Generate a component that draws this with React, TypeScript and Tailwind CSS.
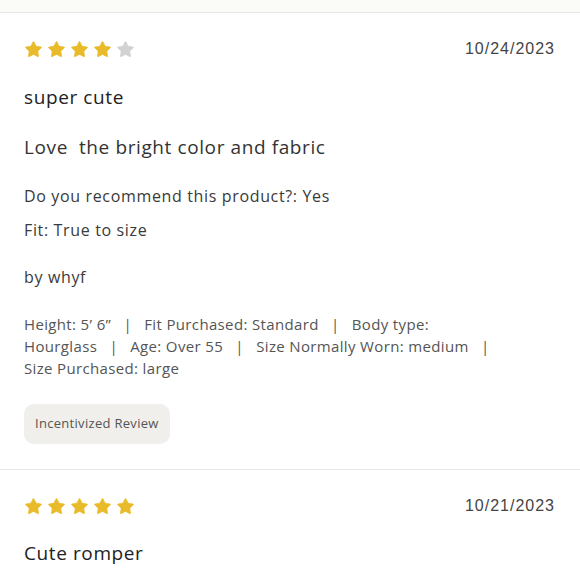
import { Star } from "lucide-react";

const reviews = [
  {
    rating: 4,
    date: "10/24/2023",
    title: "super cute",
    body: "Love  the bright color and fabric",
    recommend: "Yes",
    fit: "True to size",
    author: "whyf",
    specs: [
      "Height: 5\u2019 6\u201D",
      "Fit Purchased: Standard",
      "Body type: Hourglass",
      "Age: Over 55",
      "Size Normally Worn: medium",
      "Size Purchased: large",
    ],
    incentivized: true,
  },
  {
    rating: 5,
    date: "10/21/2023",
    title: "Cute romper",
  },
];

const Stars = ({ rating }: { rating: number }) => (
  <div className="flex gap-[4px]">
    {[0, 1, 2, 3, 4].map((i) => (
      <Star
        key={i}
        className={
          i < rating
            ? "w-[19px] h-[19px] fill-[#e9bb2a] text-[#e9bb2a]"
            : "w-[19px] h-[19px] fill-[#d2d2d2] text-[#d2d2d2]"
        }
        strokeWidth={1}
      />
    ))}
  </div>
);

const App = () => {
  return (
    <div className="w-[580px] h-[580px] overflow-hidden bg-white font-['Open_Sans','Noto_Sans',sans-serif] text-[#333]">
      <div className="h-[13px] bg-[#fbfbf7] border-b border-[#e6e6e3]" />
      {reviews.map((r, idx) => (
        <div
          key={idx}
          className={
            idx === 0
              ? "pl-6 pr-[25px] pt-[26px] pb-[25px] border-b border-[#e6e6e3]"
              : "pl-6 pr-[25px] pt-[26px]"
          }
        >
          <div className="flex items-center justify-between h-[20px]">
            <Stars rating={r.rating} />
            <span className="font-['Liberation_Sans',sans-serif] text-[16px] tracking-[1px] text-[#444]">
              {r.date}
            </span>
          </div>
          <div
            className={
              idx === 0
                ? "mt-[26px] text-[19px] tracking-[0.6px] text-[#222] leading-[24px]"
                : "mt-[25px] text-[19px] tracking-[0.6px] text-[#222] leading-[24px]"
            }
          >
            {r.title}
          </div>
          {r.body && (
            <>
              <div className="mt-[26px] text-[19px] tracking-[0.6px] text-[#333] leading-[24px] whitespace-pre">
                {r.body}
              </div>
              <div className="mt-[26px] text-[16px] tracking-[0.65px] leading-[22px] text-[#3a3a3a]">
                Do you recommend this product?: {r.recommend}
              </div>
              <div className="mt-[12px] text-[16px] tracking-[0.65px] leading-[22px] text-[#3a3a3a]">
                Fit: {r.fit}
              </div>
              <div className="mt-[25px] text-[16px] tracking-[0.65px] leading-[22px] text-[#3a3a3a]">
                by {r.author}
              </div>
              <div className="mt-[25px] mr-[56px] text-[15px] tracking-[0.35px] leading-[22px] text-[#555]">
                {r.specs!.map((s, i) => (
                  <span key={i}>
                    {s}
                    {i < r.specs!.length - 1 && (
                      <>
                        <span className="whitespace-nowrap">
                          {"\u00a0"}
                          <span className="px-[8px]">|</span>
                        </span>{" "}
                      </>
                    )}
                  </span>
                ))}
              </div>
              {r.incentivized && (
                <div className="mt-[25px] inline-flex items-center h-[40px] px-[11px] rounded-[10px] bg-[#f0efeb] text-[13px] tracking-[0.3px] text-[#555]">
                  Incentivized Review
                </div>
              )}
            </>
          )}
        </div>
      ))}
    </div>
  );
};

export default App;
